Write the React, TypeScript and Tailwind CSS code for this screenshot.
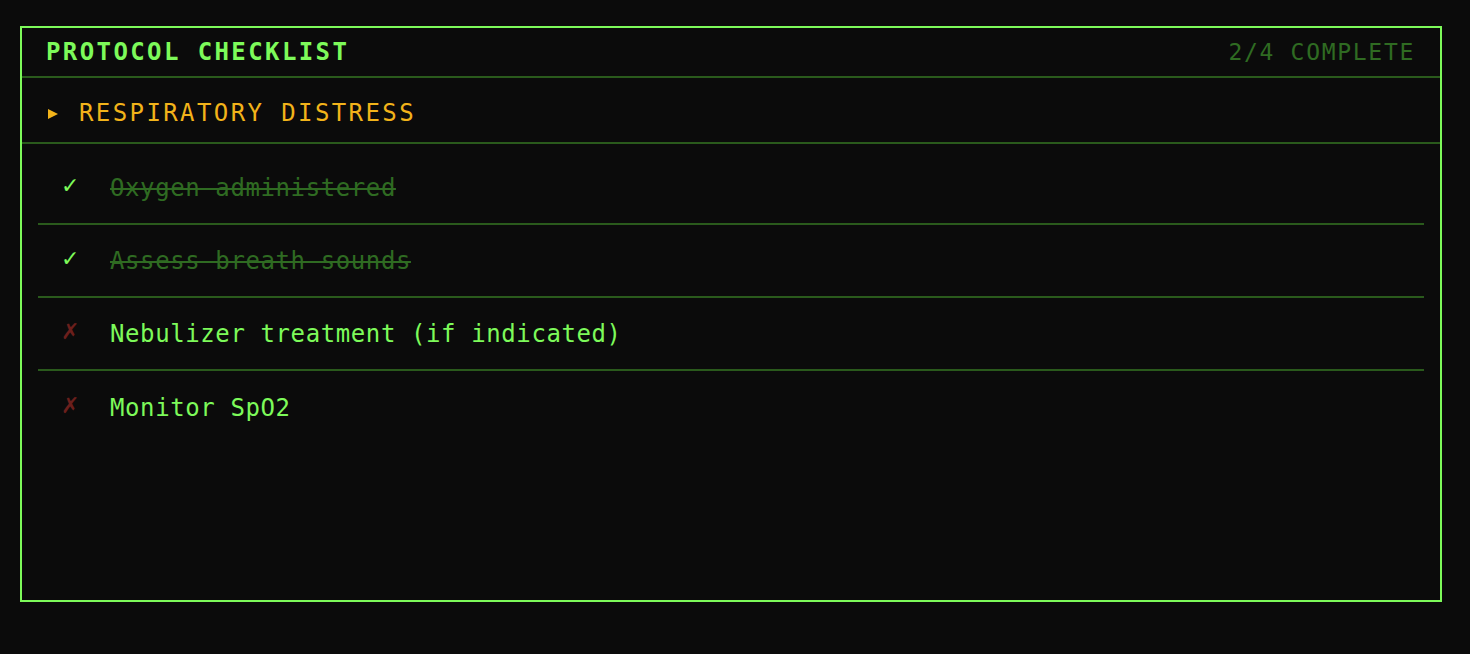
// 프로토콜 체크리스트 패널 (터미널 스타일)

interface ChecklistItem {
	id: string
	label: string
	done: boolean
}

const ITEMS: ChecklistItem[] = [
	{ id: 'oxygen', label: 'Oxygen administered', done: true },
	{ id: 'breath', label: 'Assess breath sounds', done: true },
	{ id: 'nebulizer', label: 'Nebulizer treatment (if indicated)', done: false },
	{ id: 'spo2', label: 'Monitor SpO2', done: false },
]

const MONO = "font-['DejaVu_Sans_Mono','Liberation_Mono',monospace]"

function ChecklistRow({ item }: { item: ChecklistItem }) {
	return (
		<li className="flex items-center h-[73px] pl-[23px] border-b-2 border-[#2a5a1c] last:border-b-0">
			<span
				className={`w-[49px] shrink-0 -mt-[4px] text-[22px] leading-none font-bold font-['DejaVu_Sans',sans-serif] ${
					item.done ? 'text-[#7dfa5a]' : 'text-[#6b1f1c]'
				}`}
			>
				{item.done ? '✓' : '✗'}
			</span>
			<span
				className={`text-[24px] leading-8 tracking-[0.6px] ${
					item.done ? 'text-[#2f6b22] line-through decoration-2' : 'text-[#7dfa5a]'
				}`}
			>
				{item.label}
			</span>
		</li>
	)
}

export default function App() {
	const doneCount = ITEMS.filter(i => i.done).length

	return (
		<div className={`min-h-[654px] w-full bg-[#0b0b0b] pt-[26px] pl-5 ${MONO}`}>
			<section className="w-[1422px] h-[576px] border-2 border-[#7dfa5a] flex flex-col">

				{/* 헤더 */}
				<header className="flex items-center justify-between h-[50px] pl-6 pr-[25px] border-b-2 border-[#2a5a1c]">
					<h1 className="text-[24px] leading-8 font-bold tracking-[0.1em] text-[#7dfa5a]">
						PROTOCOL CHECKLIST
					</h1>
					<span className="text-[23px] leading-8 tracking-[1.7px] text-[#2f6b22]">
						{doneCount}/{ITEMS.length} COMPLETE
					</span>
				</header>

				{/* 카테고리 */}
				<div className="flex items-center h-[66px] pl-[26px] pt-[6px] border-b-2 border-[#2a5a1c]">
					<svg width="10" height="10" viewBox="0 0 10 10" className="shrink-0 mt-[2px]">
						<polygon points="0,0 10,5 0,10" fill="#f2b31a" />
					</svg>
					<span className="ml-[21px] text-[24px] leading-8 tracking-[0.1em] text-[#f2b31a]">
						RESPIRATORY DISTRESS
					</span>
				</div>

				{/* 항목 목록 */}
				<ul className="flex flex-col px-4 pt-2">
					{ITEMS.map(item => (
						<ChecklistRow key={item.id} item={item} />
					))}
				</ul>
			</section>
		</div>
	)
}
